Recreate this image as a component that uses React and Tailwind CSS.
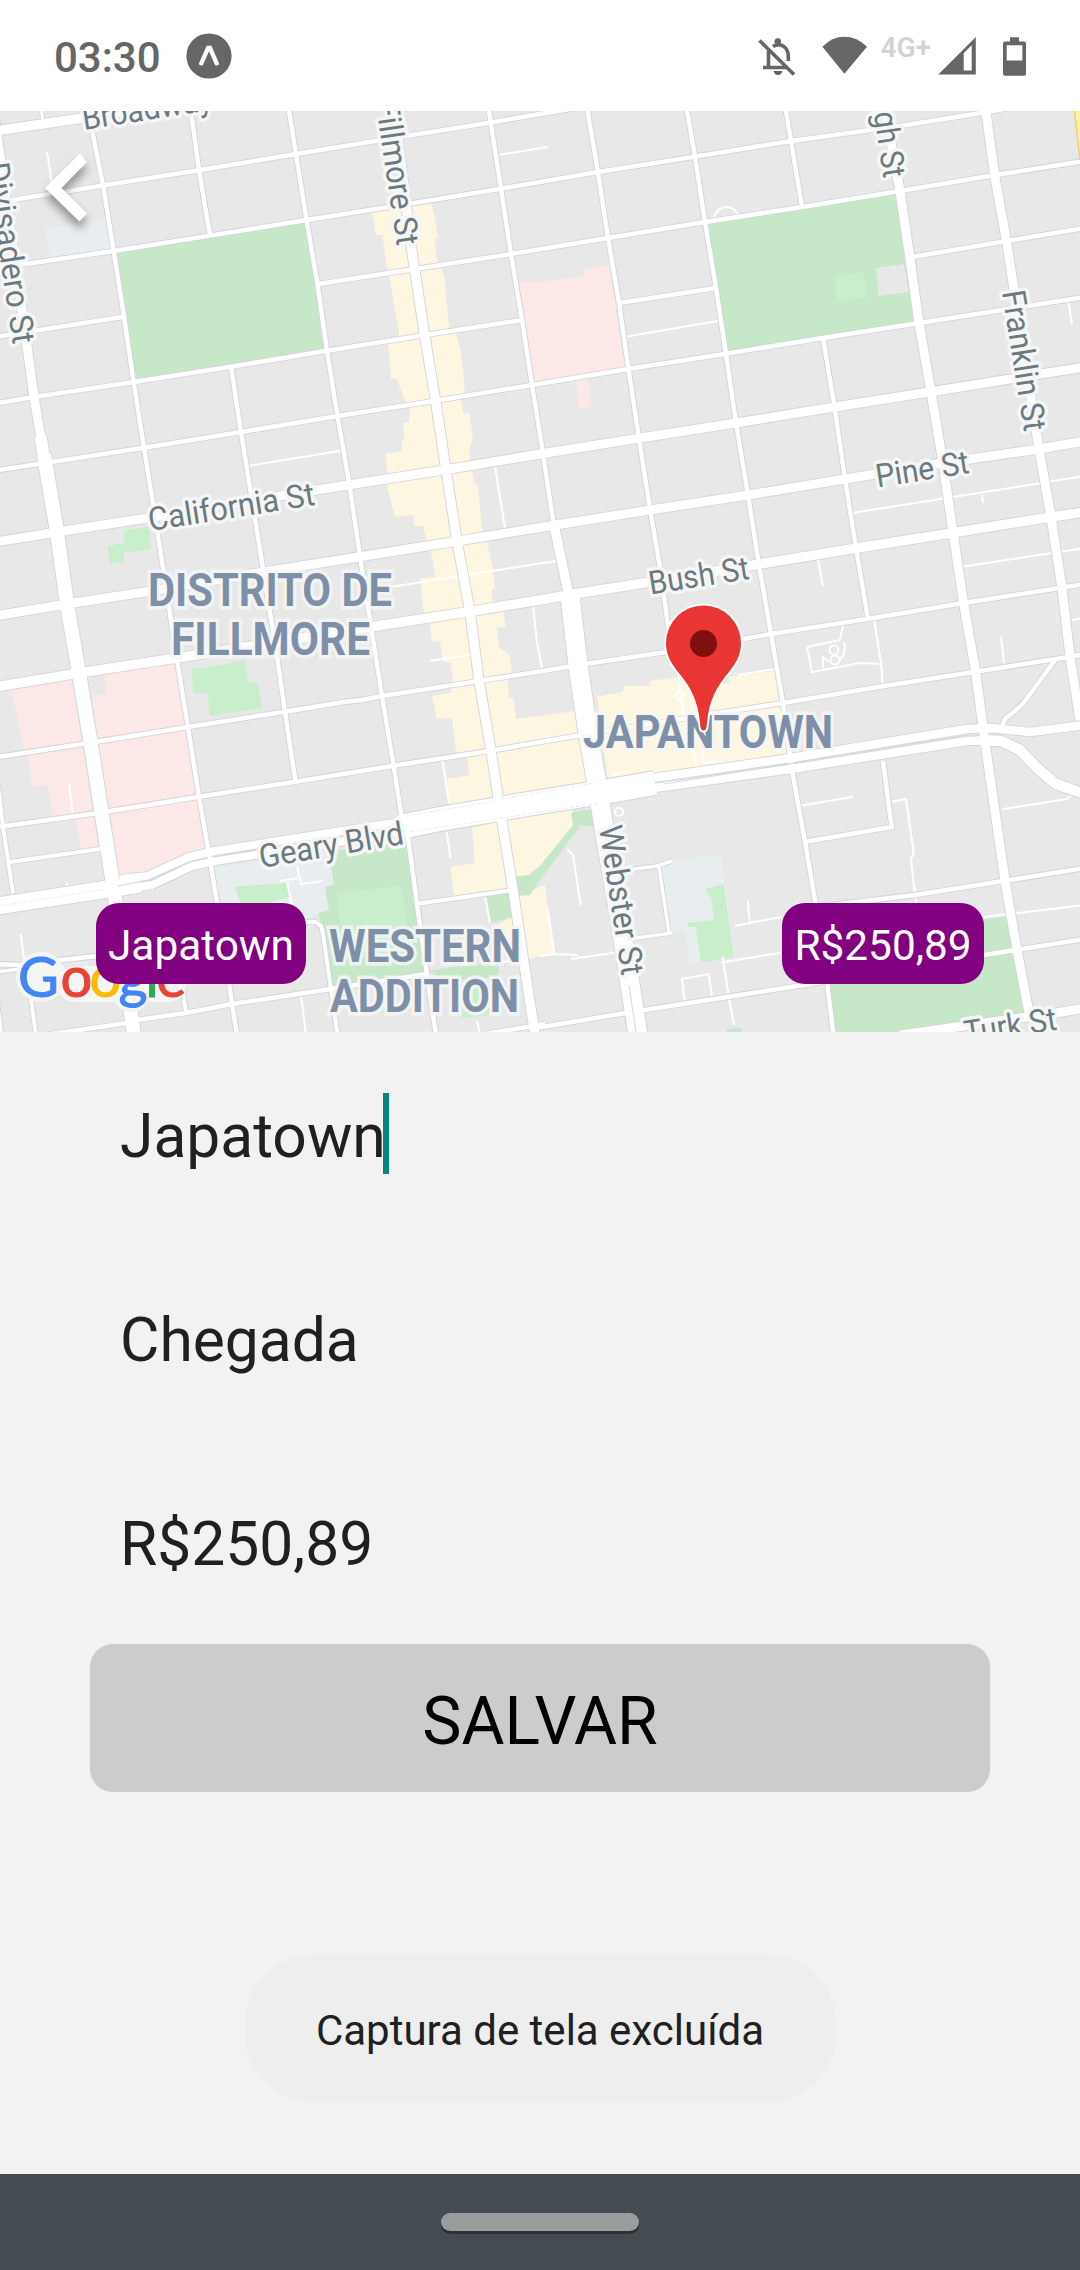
import React from "react";

const font = "font-['Roboto','Noto_Sans',sans-serif]";

// [width, points]
const streets = [
  // east-west streets
  [9.5, "-5,131 83,118 215,97"],
  [4.5, "12,200 103,185.5 200,170 296,154 406,136 491,122.5 540,114 600,104"],
  [4.5, "-5,268 26,264 113.6,251 210,235.6 306.5,220 410,203.6 501,188.7 598,172 695,156.6 791,141 900,126 981,113 1020,106"],
  [4.5, "-5,337 122,317"],
  [4.5, "318,284 415,269 511,254 608,238 705,222 802,207 900,191 995,175 1085,161"],
  [4.5, "-5,403.5 34,397 133.6,382 231,366.7 327,350.7 425,335 522,320"],
  [4.5, "619,303 716,288"],
  [4.5, "912,257 1001,242 1085,228"],
  [4.5, "-5,470.5 45,463 144,447.7 241,432 337.5,416 434,401 532,385 628,369 726,353.7 823,338 919,323 1012,308.5 1085,297"],
  [9, "-5,542 57,532 148,518 248,501 348,485 444,470 540,454 640,438 736,423 834.5,407 931,391.7 1085,367"],
  [9, "-5,616 67,604 148,591.5 263.5,572 360,556.7 458,541 540,527.5 650,510 748,495 845,479 943,463 1039,449 1085,441"],
  [9.5, "-5,687 79,673 177,658 370,627 470,611.5 540,600 571,594.5 650,582 760,564 857,548 953,532.7 1051,517 1085,512"],
  [4.5, "-5,757.5 90,742.7 188,727 285,711.7 344,702 362,700 382,696 479,681 540,671.5 578,665 667,652 743,639 771,634 867,619 963.6,603 1060,588 1085,584"],
  [4.5, "-5,827.5 100,812.7 199,796.7 295.5,781.7 393.6,765.7 491,750.7 540,742 588,734 705,715 783,703 884,686 975.6,671.7 1070,656.7 1085,654"],
  [4, "10,862 100,849"],
  [4.5, "815,907 915,895 1005,880.7 1085,868"],
  [3.5, "626,870 657,866 672,861"],
  [3.5, "636,938 672,933"],
  [4.5, "530,1029 633,1011.7 729,996.7 830,981"],
  [4.5, "984,955 1022,949 1085,939"],
  [4.5, "805,841.7 892,827 890,815 883,761"],
  [9, "900,1035 1056,1013 1085,1008"],
  [4.5, "-5,964 20,965 96,956"],
  [3.5, "-5,972 30,968"],
  [4, "290,922 315,921.7 321,926 323,934 337.5,1035"],
  [4.5, "130,1021 186,1013 232,1004 330.6,989 427,974"],
  [4.5, "45,1035 127,1023"],
  [4, "416,904 513,890"],
  [4.5, "485,1034 545,1024"],
  // north-south streets
  [9, "-8,100 27,346 34,397 43,450"],
  [12, "40.5,436 45,465"],
  [14, "44,455 57,532 67,604 79,673 90.6,742.7 101.6,813 113.6,888 134,1035"],
  [3, "41,105 42.5,119"],
  [4.5, "90,120 103,185 113.6,250.7 124,316.7 133.6,382 144,447.7 155,516.7 163.6,571.7 177,660 188,727 199,796.7 210,860 217,903 232,1004 237,1035"],
  [4.5, "190,105 199,170 210,235.6"],
  [4.5, "231,366.7 241,432 263.5,571.7 277,656.7 285,711.7 295.5,781.7"],
  [4.5, "288,105 296,154 306.5,219.7 317.5,284 327,350.7 337.5,416 349.5,485 360,556.7 382,696 393.6,765.7 401,813 408,836.7 417,904 427,974 436,1035"],
  [9.5, "394,105 411,245 424.6,335 435.6,401 446,470 457,541 470,611.7 479,681 491,750.7 499,803 513,890 523.5,960 535,1035"],
  [4.5, "488,105 501,188.7 511,254 522,320 532,385 543,453 554,527"],
  [9.5, "554,525 569,596"],
  [19, "570,596 578,665 588,733 598,790 606,840 620,920 638,1035"],
  [4.5, "586.5,105 598,172 608,238 619,302.7 628.5,369 639,438 650,509 660.5,570 671,648"],
  [4.5, "686,105 695,156.6 705,222 716,288 726,353.7 736,423 748,495 759,565 771,634 783,703 792,770 805,841.7 815.5,903 827.6,986.7 833.5,1035"],
  [4.5, "785,105 791,141 802,207"],
  [4.5, "823,338 834.5,407 845,479 856,548 868,619"],
  [9, "884,105 900,191 909,252 919,323 931,391.7 943,463 953,532.7 963.6,603 975.6,671.7 984,735 1005,880.7 1017,950 1030,1018"],
  [9, "985,105 994.6,175 1006.6,242 1018,315 1039,449 1051,517 1062,588 1070,656.7 1080,720"],
  [4, "-2,785 3,826.7 13,893"],
  [4, "-3,1000 1,1035"],
  [4, "29,985 36,1035"],
  [4, "182,985 186,1013"],
  [3.5, "659,866.7 669,933"],
  [4.5, "1001.5,728 1005,719 1022,705 1056.6,658"],
  // boulevard
  [17, "-5,906.5 108,889 140,884"],
  [8, "120,879 148,876 189,857 215,851 380,825 410,821"],
  [8, "120,890 152,885 192,866 215,861 300,848 410,831"],
  [24, "400,827 440,819 540,802 609,791 655,783"],
  [8.5, "600,786 660,777 791,758 967,729 990,728 1030,732 1085,725"],
  [8.5, "640,790 791,769 967,741 990,740"],
  [10.5, "980,740 1001,741 1020,750 1037,768 1056,784 1085,794"],
];

const alleys = [
  "47,152 52,184", "498,155 548,147", "248,466 341,450.7", "625,336.7 718,321", "495,466.7 505,528",
  "392,586.7 556,561", "533,605 537,643 542,668", "852,513 1085,476", "982,494 983,503", "962,566.7 1085,548",
  "1068,300 1072,324", "818,560 823,586", "1001,636.7 1004,663", "1072,620 1085,617.5",
  "874,619 881,663 882.6,684", "807,647 812,672 860,663 879,664", "807,647 839.6,640 844,623",
  "800,805.7 853,796.7", "892,801.7 906,799 913.6,852 911,860 916,903", "1003,809 1067,799 1072,795",
  "747.7,901 750,923", "734.6,926 781,917", "984,917 1085,905", "722.5,956.7 729,998 734,1025", "724,962 781,952.7",
  "684.6,1001 682,979 708.7,974 712,996.7", "567,849 573,855 580.6,905", "547.6,909 554.5,954", "540,956 555.5,954 578,955",
  "571,959 621,951.7", "430,660.7 470,655", "69,784 73,815", "442.5,760 449,803", "446.7,832 450.5,858", "485,896 490,923",
  "477,1020 480,1035", "20.7,934 25,965", "301,995 306,1035", "280,881 298,878", "297,866 301,884 323,881", "287,882 292,905",
  "738,675 775,669", "678,670 680,692 684,716", "694,740 696,763", "702,750 704,763 720,761 724,764", "612,775 628,771",
  "503,962 516,960", "67,883 67,890", "690,745 696,763",
];

const areas = [
  ["#c6e7c8", "115,252 306,222 325,349 135,379"],
  ["#c6e7c8", "707.7,224 895,193 914,322 727,351"],
  ["#c9eecb", "834.5,276 864,272 867,297 837,301"],
  ["#e8e8e8", "876,268 904,264 908.5,292 878.5,296"],
  ["#e8edf0", "45,228 105,218 112,250 50,260"],
  ["#fce8e6", "519,281.7 540,282 585,276 584,269 609,265 625,369 534,384"],
  ["#fce8e6", "576,380 588,379 592,407 579,408"],
  ["#c9eecb", "124,530.7 149,526.7 151,549 124,552.7 124,561 110,564 108,546 124,543"],
  ["#c9eecb", "192,669 216,666 244.5,660 248,683 258,683 262,708 210,716 207.7,693 193,693"],
  ["#fce8e6", "10,690 72,680 82,742 24,750 15.5,708"],
  ["#fce8e6", "27.5,754 83,746 92,812 53,817 48,785 32,787"],
  ["#fce8e6", "76,819 94,816 98,846 80,848"],
  ["#fce8e6", "104,675 176,662 206.6,848 188,852 141,873 119,878 92,697 106,693"],
  ["#e8edf0", "214,868 258,861 334,851 334,885 325,886.7 329,910 318.6,913 306,921 220,905"],
  ["#c9eecb", "235,886.7 287.6,882.7 289,897 262,905 241,905"],
  ["#c6e7c8", "336,851 406,838 425,974 332,987 318.6,913 329,910 325,886.7 334,885 330,860"],
  ["#c9eecb", "336,893 401,886 411.5,950 345,960"],
  ["#c6e7c8", "429,971 452,967 499,962 498,977 461,980 444,979"],
  ["#c9eecb", "470,985 485,985 490,1015 461,1018"],
  ["#fdf6e0", "372,211.7 430.5,201.7 434.6,217 438,238 434.6,239 437,260 444,275 449,328 456,333 461.5,355 465,393 461,397 463,413 469,413 473,437 469,450 472,472 475,485 478,485 482,530 487,543 492.5,567 495,589 491,590 492.5,600 503.5,611.7 505.6,626.7 497,628 499,647 509.7,655 512,673 508,682 509,697 514,698 516,719 576,710.7 590,785 540,795 499,805 449,805 446.7,779 469,775 467,756 456,752 452,718 436.7,719 432,696 450.5,692.7 453,680 450.5,663 442.5,661 440,641 432,642 429.5,623 423.6,611 420,579 435.6,576.7 431,552 426,540 423.6,526 414,526 413,515 395,517 387,486 386,454 402,451 401,442 404.6,440 403,423 409,422 410,408 405,402 397,379 391,379 388,344 399.5,335 389,276 386,260 382,235 376,235"],
  ["#fdf6e0", "597,696.7 622.6,692 624,686 649.5,686 650,681 678,677 729,684 729,677 775,670.7 779,703 788,706.7 791,755 660,775 608,780"],
  ["#fdf6e0", "472,828 500,820 508,888 454,896 450.5,867 475,863"],
  ["#fdf6e0", "506,820 572,808 575,828 540,867 532,875 514,877"],
  ["#fdf6e0", "518,895 545,885 554,953 528,959"],
  ["#fdf6e0", "497.6,925 511,917 520,960 508,957"],
  ["#c6e7c8", "571,813 596,808 598,827 581,825 540,880 530,895 515,896 514,877 528.6,875 540,866 573,825"],
  ["#c6e7c8", "486,896 509,892 512,917 491,923"],
  ["#e8edf0", "662,867 672.6,860 721,854 735,957 690,964 684.6,933 670,933"],
  ["#c9eecb", "705,889 723.6,884 734,957 701,963 695.7,927 688,927 688,922.7 714,920 711,898"],
  ["#c6e7c8", "818,943 1009,916 1027,1014 922,1034 835,1034"],
  ["#c6e7c8", "727,1029 741,1027.7 743,1034 727,1034"],
];

// [text, x, y, angle, length]
const streetLabels = [
  ["Broadway", 84, 130, -9, 131],
  ["California St", 150, 531, -9, 168],
  ["Pine St", 877.5, 487.5, -9, 94],
  ["Bush St", 650.5, 594.5, -9, 101],
  ["Geary Blvd", 261, 868, -9.5, 146],
  ["Turk St", 966, 1044, -9, 93],
  ["Fillmore St", 375.5, 102, 81.5, 146],
  ["Divisadero St", -14, 164, 81.5, 183],
  ["Gough St", 866, 61, 81.5, 119],
  ["Franklin St", 1002, 292, 81, 142],
  ["Webster St", 599, 827, 81.3, 151],
];

const districtLabels = [
  ["DISTRITO DE", 148, 605.5, 244],
  ["FILLMORE", 171, 655, 199],
  ["WESTERN", 329, 962, 192],
  ["ADDITION", 330, 1012, 189],
  ["JAPANTOWN", 583, 748, 250],
];

const logoLetters = [
  ["G", 18, "#4285f4"],
  ["o", 60.5, "#ea4335"],
  ["o", 89.5, "#fbbc05"],
  ["g", 118.5, "#4285f4"],
  ["l", 145.5, "#34a853"],
  ["e", 156.5, "#ea4335"],
];

function CityMap() {
  return (
    <svg viewBox="0 111 1080 921" className={`block h-full w-full ${font}`}>
      <rect x="0" y="111" width="1080" height="921" fill="#e8e8e8" />
      {areas.map(([c, p], i) => (
        <polygon key={i} points={p} fill={c} />
      ))}
      <g fill="none" stroke="#ffffff" strokeWidth="2" strokeLinejoin="round">
        {alleys.map((p, i) => (
          <polyline key={i} points={p} />
        ))}
        <path d="M713,222 Q715,207 728,207 Q737,209 738,217" />
        <circle cx="834" cy="650" r="4.5" />
        <circle cx="835" cy="660" r="4.5" />
        <path d="M823,668 V657 L829,662 M840,660 Q847,652 844,642" />
        <circle cx="680" cy="696" r="4.5" />
        <circle cx="619" cy="812" r="4" />
      </g>
      <g fill="none" stroke="#d3d3da" strokeLinejoin="round">
        {streets.map(([w, p], i) => (
          <polyline key={i} points={p} strokeWidth={w + 1.8} />
        ))}
      </g>
      <g fill="none" stroke="#ffffff" strokeLinejoin="round">
        {streets.map(([w, p], i) => (
          <polyline key={i} points={p} strokeWidth={w} />
        ))}
      </g>
      <g fill="none" stroke="#d8d8de" strokeWidth="1">
        <path d="M664,784 L791,763.5 L967,735" />
        <path d="M118,886 L148,880 L189,862 L208,858 M214,857 L258,850" />
        <path d="M0,906 L105,889 M406,816 L495,801 M500,799 L595,783 M410,832 L600,803" strokeDasharray="4 2" strokeWidth="0.5" />
        <path d="M629,985 L636,1032" />
      </g>
      <polygon points="1074.5,111 1080,111 1080,158" fill="#fff0a8" />
      <path d="M1074.5,111 L1080,160" stroke="#f6cf65" strokeWidth="1.5" />
      <g fill="#6b7a80" stroke="#f6f6f6" strokeWidth="7" strokeLinejoin="round" paintOrder="stroke" fontSize="32.5">
        {streetLabels.map(([t, x, y, a, l]) => (
          <text key={t} transform={`translate(${x} ${y}) rotate(${a})`} textLength={l} lengthAdjust="spacingAndGlyphs">
            {t}
          </text>
        ))}
      </g>
      <g fill="#7e90a8" stroke="#f6f6f6" strokeOpacity="0.85" strokeWidth="7" paintOrder="stroke" fontSize="45.5" fontWeight="700">
        {districtLabels.map(([t, x, y, l]) => (
          <text key={t} x={x} y={y} textLength={l} lengthAdjust="spacingAndGlyphs">
            {t}
          </text>
        ))}
      </g>
      <g stroke="#f5f5f5" strokeWidth="36" strokeLinecap="round" fill="#f5f5f5">
        <circle cx="41" cy="977" r="25" stroke="none" />
        <path d="M75,984 H168 M131,984 V994" />
      </g>
      <g className="font-['Lato',sans-serif]" fontSize="56">
        {logoLetters.map(([t, x, c], i) => (
          <text key={i} x={x} y="997" fill={c} stroke={c} strokeWidth="1">
            {t}
          </text>
        ))}
      </g>
      <path
        d="M703.5,730.5 C700.5,730.5 700.5,727 700,723 C698,700 690,686 678,672 C670,662 666,654 666,643 A37.5,37.5 0 0 1 741,643 C741,654 737,662 729,672 C717,686 709,700 707,723 C706.5,727 706.5,730.5 703.5,730.5 Z"
        fill="#ea3535"
        stroke="#ffffff"
        strokeWidth="4"
        paintOrder="stroke"
      />
      <circle cx="703.5" cy="643.5" r="13.5" fill="#801010" />
    </svg>
  );
}

function StatusBar() {
  return (
    <header className="flex h-[111px] shrink-0 items-center bg-white pr-[53px] pl-[54px] text-[#666666]">
      <span className="mt-[4px] w-[132px] text-[42px] leading-none font-medium">03:30</span>
      <svg viewBox="0 0 46 46" className="h-[46px] w-[46px]">
        <circle cx="23" cy="23" r="22.6" fill="currentColor" />
        <path d="M12.6 31.3 20.6 12.7H25.4L33.4 31.3 30.2 32.8 28.9 31.8 23 18.3 17.1 31.8 15.8 32.8Z" fill="#fff" />
      </svg>
      <svg viewBox="755 30 280 50" className="-mr-[8px] ml-auto h-[50px] w-[280px] shrink-0">
        <g fill="none" stroke="currentColor" strokeWidth="3.6">
          <path d="M768.5 50V66M763 66.5H788M773 45.5Q779 41.5 784.5 46 788.3 49.5 788.3 55V60" />
          <path d="M759.5 39.5 794 73.5" />
        </g>
        <path d="M774.5 42V39.5Q775 37 777.8 37T781 39.5V42ZM773.5 70H782.5Q781.5 74 778 74T773.5 70Z" fill="currentColor" />
        <path d="M844.4 72.7 822.4 45.7Q832 35.8 844.4 35.8T867 45.7Z" fill="currentColor" />
        <text x="880.5" y="55.8" fontSize="27.5" fontWeight="600" fill="#d2d2d2" textLength="50.5" lengthAdjust="spacingAndGlyphs">
          4G+
        </text>
        <path fillRule="evenodd" d="M938.3 73.5 975.8 36V73.5ZM963.7 52.3V69.5H971.7V44.3Z" fill="currentColor" />
        <path fillRule="evenodd" d="M1010 36.3H1019V40.5H1024Q1026 40.5 1026 42.5V72.7Q1026 74.7 1024 74.7H1005Q1003 74.7 1003 72.7V42.5Q1003 40.5 1005 40.5H1010ZM1006.7 44.3V59.5H1022.4V44.3Z" fill="currentColor" />
      </svg>
    </header>
  );
}

export default function App() {
  return (
    <div className={`flex h-[2270px] w-[1080px] flex-col overflow-hidden bg-[#f2f2f2] ${font}`}>
      <StatusBar />

      <section className="relative h-[921px] shrink-0 overflow-hidden">
        <CityMap />
        <button className="absolute top-[35px] left-[35px]" aria-label="Voltar">
          <svg viewBox="35 146 66 96" className="h-[96px] w-[66px] overflow-visible drop-shadow-[0_7px_5px_rgba(0,0,0,0.4)]">
            <polygon points="80,153.5 87,162 61.5,188 87,213.5 79.5,221.5 45,188" fill="#fff" />
          </svg>
        </button>
        <div className="absolute inset-x-[96px] top-[792px] flex justify-between text-[42.35px] leading-none text-white">
          <span className="flex h-[81px] w-[210px] items-center justify-center rounded-[23px] bg-[#800080] pt-[5px]">Japatown</span>
          <span className="flex h-[81px] w-[202px] items-center justify-center rounded-[23px] bg-[#800080] pt-[5px]">R$250,89</span>
        </div>
      </section>

      <main className="flex flex-1 flex-col px-[90px] text-[60.5px] leading-[88px] text-[#202020]">
        <div className="mt-[61px] flex h-[204px] items-start pl-[30px]">
          <span>Japatown</span>
          <span className="-ml-[3px] h-[81px] w-[6px] bg-[#00897b]" />
        </div>
        <div className="h-[204px] pl-[30px]">Chegada</div>
        <div className="h-[143px] pl-[30px]">R$250,89</div>
        <button className="flex h-[148px] w-[900px] shrink-0 items-center justify-center rounded-[23px] bg-[#cccccc] pt-[8px] text-[66px] leading-none text-black">
          SALVAR
        </button>
        <div className="mt-[163px] flex h-[147px] w-[591px] items-center justify-center self-center rounded-[68px] bg-[#eeeeee] pt-[5px] text-[42px] leading-none">
          Captura de tela excluída
        </div>
      </main>

      <footer className="flex h-[96px] shrink-0 justify-center bg-[#444b51] pt-[39px]">
        <div className="h-[18px] w-[198px] rounded-full bg-[#9a9d9d] shadow-[0_3px_0_#2a3036]" />
      </footer>
    </div>
  );
}
